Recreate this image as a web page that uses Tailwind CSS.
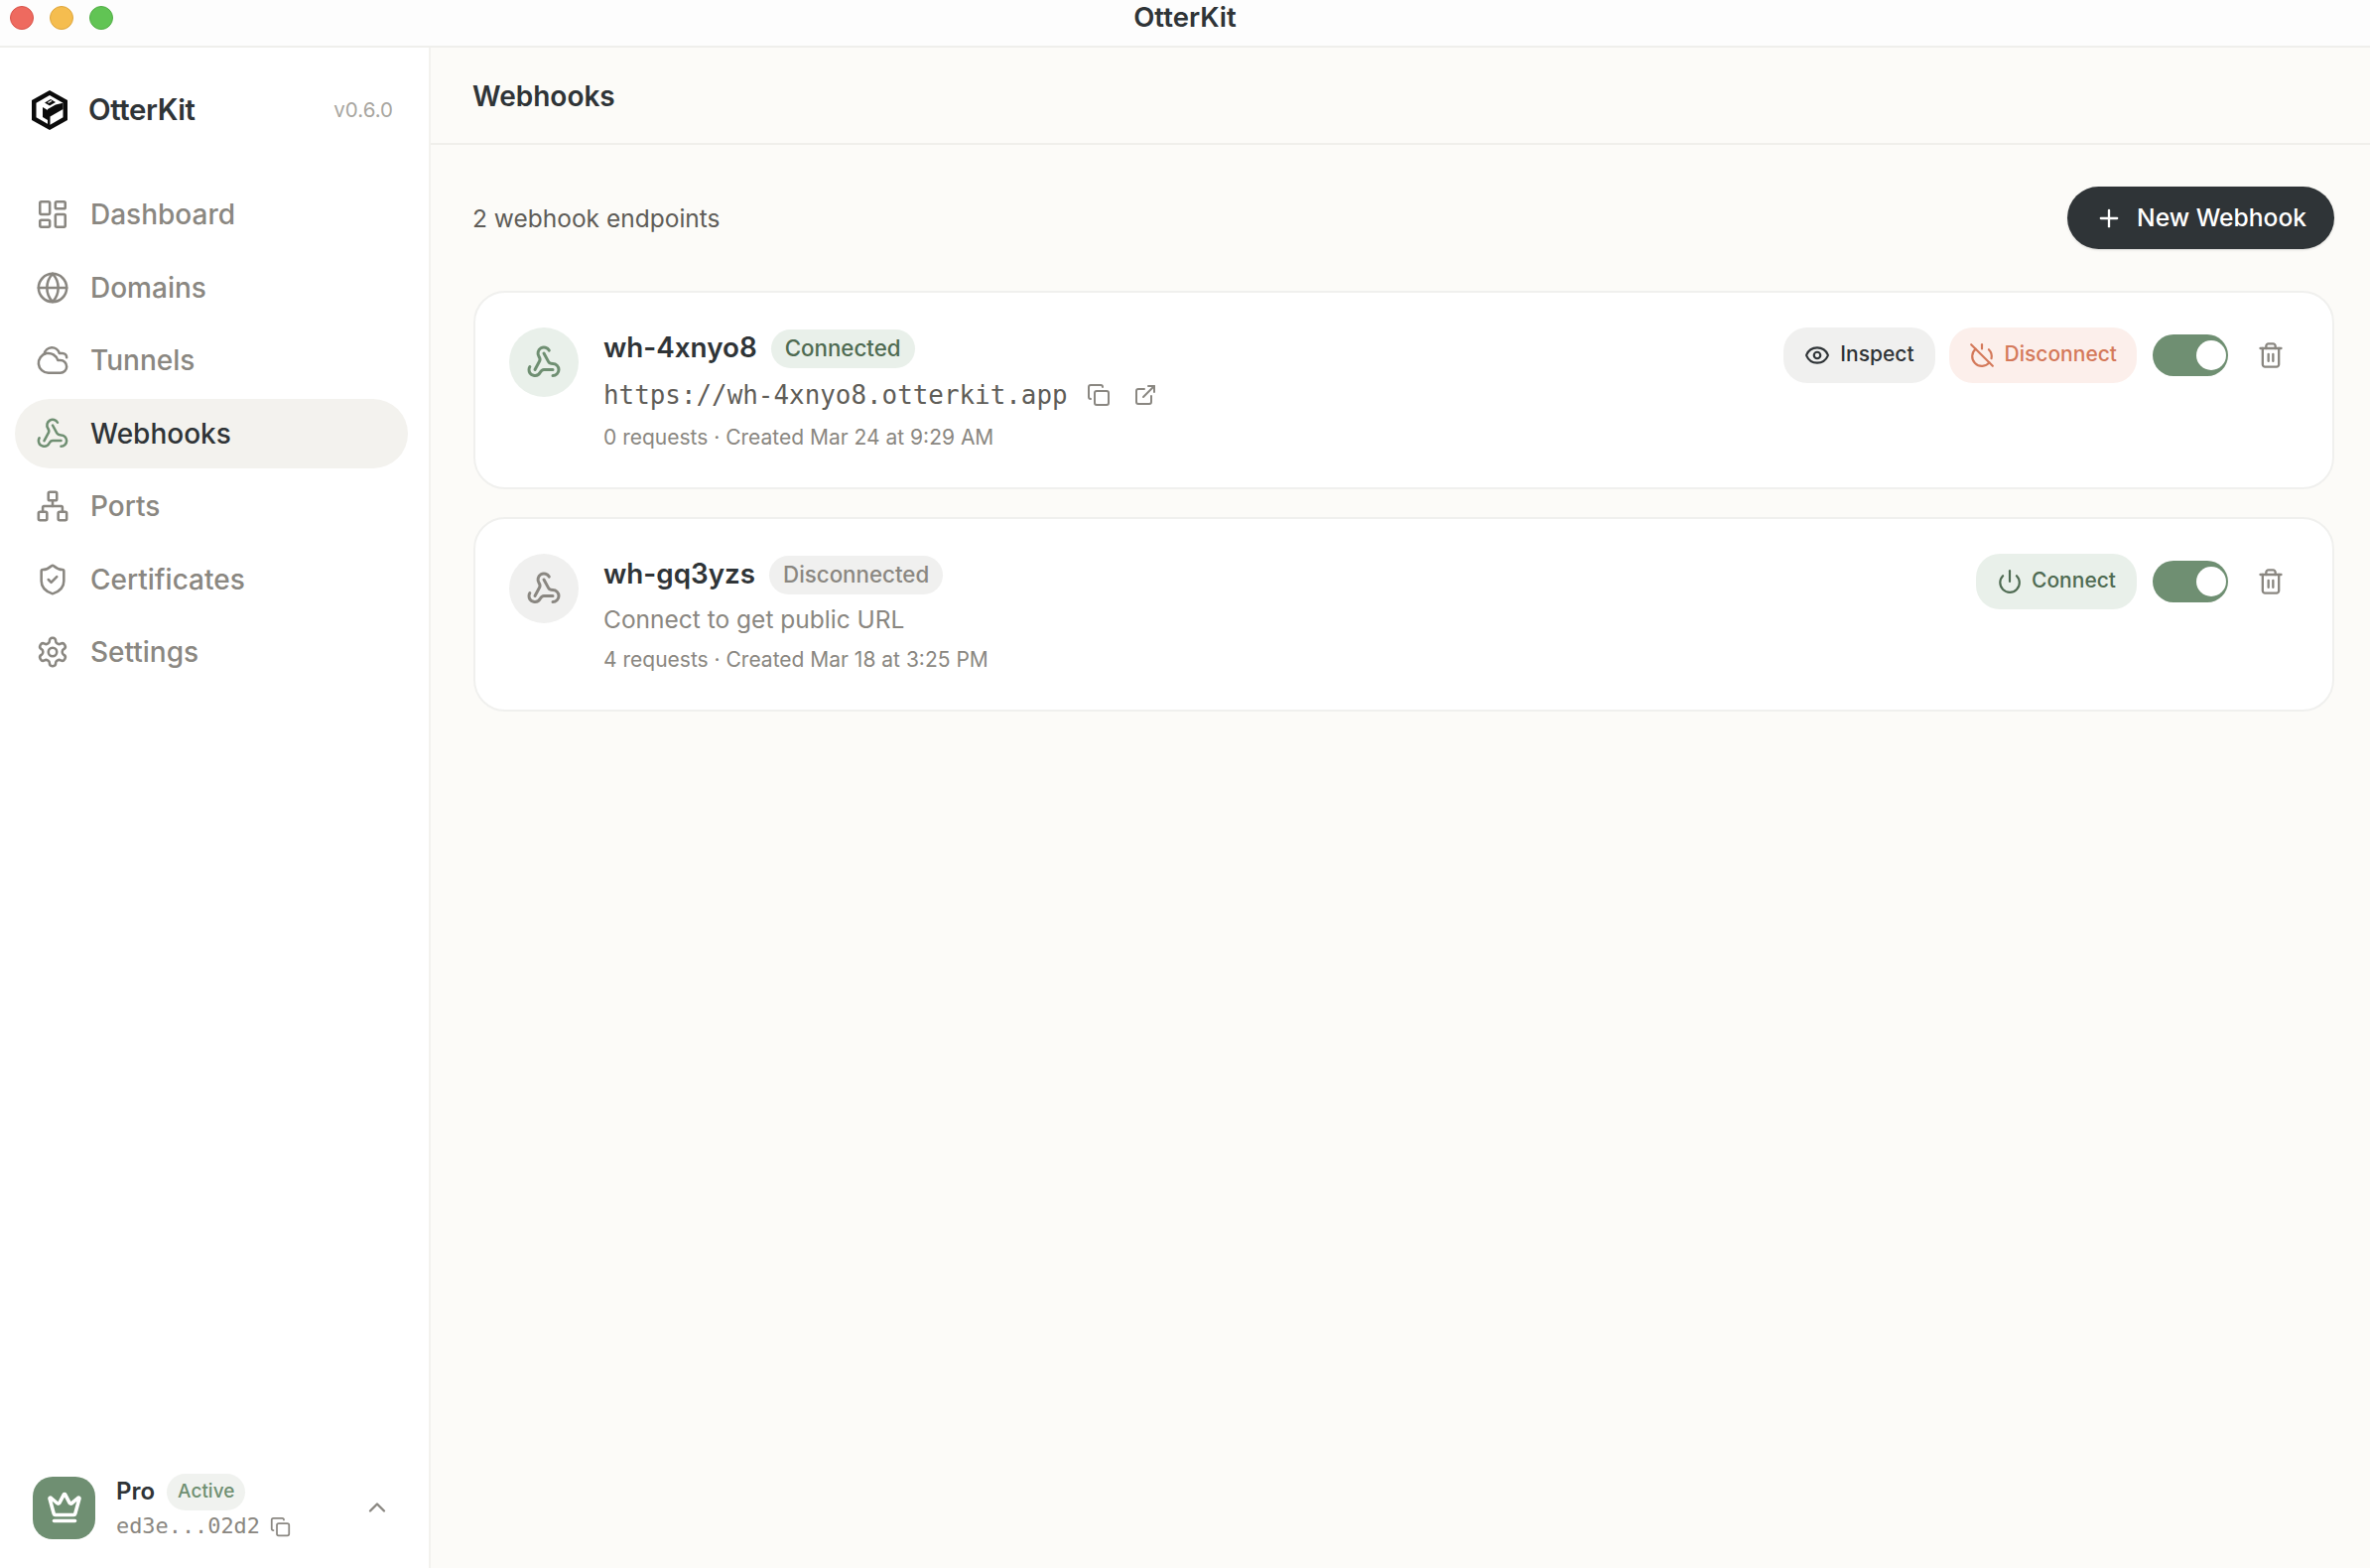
<!doctype html>
<html><head><meta charset="utf-8"><title>OtterKit</title>
<script src="https://cdn.jsdelivr.net/npm/@tailwindcss/browser@4"></script></head>
<body class="m-0 bg-white">
<svg width="0" height="0" class="absolute"><defs>
<symbol id="hook" viewBox="0 0 24 24"><path d="M18 16.98h-5.99c-1.1 0-1.95.94-2.48 1.9A4 4 0 0 1 2 17c.01-.7.2-1.4.57-2"/><path d="m6 17 3.13-5.78c.53-.97.1-2.18-.5-3.1a4 4 0 1 1 6.89-4.06"/><path d="m12 6 3.13 5.73C15.66 12.7 16.9 13 18 13a4 4 0 0 1 0 8"/></symbol>
<symbol id="copy" viewBox="0 0 24 24"><rect x="8" y="8" width="14" height="14" rx="2"/><path d="M4 16c-1.1 0-2-.9-2-2V4c0-1.1.9-2 2-2h10c1.1 0 2 .9 2 2"/></symbol>
<symbol id="trash" viewBox="0 0 24 24"><path d="M3 6h18"/><path d="M19 6v14c0 1-1 2-2 2H7c-1 0-2-1-2-2V6"/><path d="M8 6V4c0-1 1-2 2-2h4c1 0 2 1 2 2v2"/><path d="M10 11v6"/><path d="M14 11v6"/></symbol>
</defs></svg>
<div class="w-[2388px] h-[1580px] flex flex-col overflow-hidden font-['Inter',sans-serif] text-[#2f3437]">
  <header class="relative h-[48px] shrink-0 flex items-center justify-center bg-[#fdfdfd] border-b-2 border-[#efefec] pb-[12px]">
    <div class="absolute left-[10px] top-[6px] flex gap-[16px]">
      <span class="w-[24px] h-[24px] rounded-full bg-[#ee6a5f] border border-[#d9534a]"></span>
      <span class="w-[24px] h-[24px] rounded-full bg-[#f5bd4f] border border-[#dfa63c]"></span>
      <span class="w-[24px] h-[24px] rounded-full bg-[#61c454] border border-[#52ae46]"></span>
    </div>
    <span class="text-[27.5px] leading-[32px] font-semibold">OtterKit</span>
  </header>
  <div class="flex-1 flex min-h-0">
    <aside class="w-[434px] shrink-0 bg-white border-r-2 border-[#f3f2ee] flex flex-col">
      <div class="h-[126px] pl-[32px] pr-[36px] flex items-center shrink-0">
        <svg class="w-[36px] h-[40px]" viewBox="0 0 36 40"><path d="M18 0 36 10V30L18 40 0 30V10Z" fill="#0b0b0b"/><path d="M18 5 31.5 12.7V27.3L18 35 4.5 27.3V12.7Z" fill="#fff"/><path d="M16 19 24 14.5 31.5 12.7V19L18.5 26.5V36H16Z" fill="#0b0b0b"/><path d="M11 17 16 20V30L11 27Z" fill="#0b0b0b"/><path d="M13 12.5 19 9 24 12 18 15.5Z" fill="#0b0b0b"/><path d="M16.5 12.5 20 10.5" stroke="#fff" stroke-width="1.4"/></svg>
        <span class="ml-[21px] text-[29.4px] leading-[40px] font-semibold tracking-[-0.4px]">OtterKit</span>
        <span class="ml-auto text-[20.5px] text-[#a8a6a0]">v0.6.0</span>
      </div>
      <nav class="mt-[7px] pl-[15px] pr-[21px] flex flex-col gap-[3.5px] text-[28px] font-medium text-[#8a8781]">
        <a class="h-[70px] rounded-[35px] pl-[21px] flex items-center gap-[21px]"><svg class="w-[34px] h-[34px]" viewBox="0 0 24 24" fill="none" stroke="currentColor" stroke-width="1.8" stroke-linecap="round" stroke-linejoin="round"><rect x="3" y="3" width="7" height="9" rx="1"/><rect x="14" y="3" width="7" height="5" rx="1"/><rect x="14" y="12" width="7" height="9" rx="1"/><rect x="3" y="16" width="7" height="5" rx="1"/></svg>Dashboard</a>
        <a class="h-[70px] rounded-[35px] pl-[21px] flex items-center gap-[21px]"><svg class="w-[34px] h-[34px]" viewBox="0 0 24 24" fill="none" stroke="currentColor" stroke-width="1.8" stroke-linecap="round" stroke-linejoin="round"><circle cx="12" cy="12" r="10"/><path d="M12 2a14.5 14.5 0 0 0 0 20 14.5 14.5 0 0 0 0-20"/><path d="M2 12h20"/></svg>Domains</a>
        <a class="h-[70px] rounded-[35px] pl-[21px] flex items-center gap-[21px]"><svg class="w-[34px] h-[34px]" viewBox="0 0 24 24" fill="none" stroke="currentColor" stroke-width="1.8" stroke-linecap="round" stroke-linejoin="round"><path d="M17.5 21H9a7 7 0 1 1 6.71-9h1.79a4.5 4.5 0 1 1 0 9Z"/><path d="M22 10a3 3 0 0 0-3-3h-2.207a5.502 5.502 0 0 0-10.702.5"/></svg>Tunnels</a>
        <a class="h-[70px] rounded-[35px] pl-[21px] flex items-center gap-[21px] bg-[#f3f2ee] text-[#2f3437]"><svg class="w-[34px] h-[34px] text-[#6f8f72]" fill="none" stroke="currentColor" stroke-width="1.8" stroke-linecap="round" stroke-linejoin="round"><use href="#hook"/></svg>Webhooks</a>
        <a class="h-[70px] rounded-[35px] pl-[21px] flex items-center gap-[21px]"><svg class="w-[34px] h-[34px]" viewBox="0 0 24 24" fill="none" stroke="currentColor" stroke-width="1.8" stroke-linecap="round" stroke-linejoin="round"><rect x="16" y="16" width="6" height="6" rx="1"/><rect x="2" y="16" width="6" height="6" rx="1"/><rect x="9" y="2" width="6" height="6" rx="1"/><path d="M5 16v-3a1 1 0 0 1 1-1h12a1 1 0 0 1 1 1v3"/><path d="M12 12V8"/></svg>Ports</a>
        <a class="h-[70px] rounded-[35px] pl-[21px] flex items-center gap-[21px]"><svg class="w-[34px] h-[34px]" viewBox="0 0 24 24" fill="none" stroke="currentColor" stroke-width="1.8" stroke-linecap="round" stroke-linejoin="round"><path d="M20 13c0 5-3.5 7.5-7.66 8.95a1 1 0 0 1-.67-.01C7.5 20.5 4 18 4 13V6a1 1 0 0 1 1-1c2 0 4.5-1.2 6.24-2.72a1.17 1.17 0 0 1 1.52 0C14.51 3.81 17 5 19 5a1 1 0 0 1 1 1z"/><path d="m9 12 2 2 4-4"/></svg>Certificates</a>
        <a class="h-[70px] rounded-[35px] pl-[21px] flex items-center gap-[21px]"><svg class="w-[34px] h-[34px]" viewBox="0 0 24 24" fill="none" stroke="currentColor" stroke-width="1.8" stroke-linecap="round" stroke-linejoin="round"><path d="M12.22 2h-.44a2 2 0 0 0-2 2v.18a2 2 0 0 1-1 1.73l-.43.25a2 2 0 0 1-2 0l-.15-.08a2 2 0 0 0-2.73.73l-.22.38a2 2 0 0 0 .73 2.73l.15.1a2 2 0 0 1 1 1.72v.51a2 2 0 0 1-1 1.74l-.15.09a2 2 0 0 0-.73 2.73l.22.38a2 2 0 0 0 2.73.73l.15-.08a2 2 0 0 1 2 0l.43.25a2 2 0 0 1 1 1.73V20a2 2 0 0 0 2 2h.44a2 2 0 0 0 2-2v-.18a2 2 0 0 1 1-1.73l.43-.25a2 2 0 0 1 2 0l.15.08a2 2 0 0 0 2.73-.73l.22-.39a2 2 0 0 0-.73-2.73l-.15-.08a2 2 0 0 1-1-1.74v-.5a2 2 0 0 1 1-1.74l.15-.09a2 2 0 0 0 .73-2.73l-.22-.38a2 2 0 0 0-2.73-.73l-.15.08a2 2 0 0 1-2 0l-.43-.25a2 2 0 0 1-1-1.73V4a2 2 0 0 0-2-2z"/><circle cx="12" cy="12" r="3"/></svg>Settings</a>
      </nav>
      <div class="mt-auto h-[96px] mb-[13px] pl-[33px] pr-[38px] flex items-center">
        <div class="w-[63px] h-[63px] rounded-[20px] bg-[#6f8f72] flex items-center justify-center shrink-0">
          <svg class="w-[36px] h-[36px] text-white" viewBox="0 0 24 24" fill="none" stroke="currentColor" stroke-width="2.4" stroke-linecap="round" stroke-linejoin="round"><path d="M11.562 3.266a.5.5 0 0 1 .876 0L15.39 8.87a1 1 0 0 0 1.516.294L21.183 5.5a.5.5 0 0 1 .798.519l-2.834 10.246a1 1 0 0 1-.956.734H5.81a1 1 0 0 1-.957-.734L2.02 6.02a.5.5 0 0 1 .798-.519l4.276 3.664a1 1 0 0 0 1.516-.294z"/><path d="M5 21h14"/></svg>
        </div>
        <div class="ml-[21px] flex flex-col">
          <div class="flex items-center gap-[12px] h-[38px]"><span class="text-[24px] font-semibold">Pro</span><span class="h-[37px] px-[11px] rounded-full bg-[#f0f2ef] text-[#6f8f72] text-[19px] font-medium flex items-center">Active</span></div>
          <div class="flex items-center gap-[10px] text-[#8a8781] h-[32px]"><span class="font-['DejaVu_Sans_Mono',monospace] text-[21.9px]">ed3e...02d2</span><svg class="w-[21px] h-[21px]" fill="none" stroke="currentColor" stroke-width="2" stroke-linecap="round" stroke-linejoin="round"><use href="#copy"/></svg></div>
        </div>
        <svg class="ml-auto w-[28px] h-[28px] text-[#8a8781]" viewBox="0 0 24 24" fill="none" stroke="currentColor" stroke-width="2" stroke-linecap="round" stroke-linejoin="round"><path d="m18 15-6-6-6 6"/></svg>
      </div>
    </aside>
    <main class="flex-1 min-w-0 bg-[#fcfbf8] flex flex-col">
      <div class="h-[98px] shrink-0 border-b-2 border-[#f0efeb] pl-[42px] pt-[1px] flex items-center"><h1 class="text-[28px] font-semibold">Webhooks</h1></div>
      <div class="pl-[43px] pr-[36px] pt-[42px] flex flex-col">
        <div class="flex items-center justify-between h-[63px]">
          <span class="-ml-[1px] mt-[1px] text-[24.5px] text-[#5f5d58]">2 webhook endpoints</span>
          <button class="h-[63px] pl-[28px] pr-[28px] rounded-full bg-[#2f3437] text-white text-[24.6px] font-medium flex items-center gap-[14px] shadow-sm"><svg class="w-[28px] h-[28px]" viewBox="0 0 24 24" fill="none" stroke="currentColor" stroke-width="2" stroke-linecap="round" stroke-linejoin="round"><path d="M5 12h14"/><path d="M12 5v14"/></svg>New Webhook</button>
        </div>
        <div class="mt-[42px] flex flex-col gap-[28px]">
          <section class="h-[200px] bg-white rounded-[32px] border-2 border-[#f0f0ee] pl-[34px] pr-[48px] pt-[35px] flex">
            <div class="w-[70px] h-[70px] rounded-full bg-[#e9f0ea] text-[#6f8f72] flex items-center justify-center shrink-0"><svg class="w-[36px] h-[36px]" fill="none" stroke="currentColor" stroke-width="2" stroke-linecap="round" stroke-linejoin="round"><use href="#hook"/></svg></div>
            <div class="ml-[25px] flex flex-col pt-[1px]">
              <div class="flex items-center gap-[14px] h-[40px]"><span class="text-[27.8px] font-semibold">wh-4xnyo8</span><span class="h-[39px] px-[14px] rounded-full bg-[#e9f0ea] text-[#4f6b52] text-[22.3px] font-medium flex items-center">Connected</span></div>
              <div class="mt-[7px] h-[40px] flex items-center text-[#5f5d58]"><span class="font-['DejaVu_Sans_Mono',monospace] text-[25.9px]">https://wh-4xnyo8.otterkit.app</span><svg class="ml-[19px] w-[24px] h-[24px] text-[#8a8781]" fill="none" stroke="currentColor" stroke-width="2" stroke-linecap="round" stroke-linejoin="round"><use href="#copy"/></svg><svg class="ml-[23px] w-[24px] h-[24px] text-[#8a8781]" viewBox="0 0 24 24" fill="none" stroke="currentColor" stroke-width="2" stroke-linecap="round" stroke-linejoin="round"><path d="M15 3h6v6"/><path d="M10 14 21 3"/><path d="M18 13v6a2 2 0 0 1-2 2H5a2 2 0 0 1-2-2V8a2 2 0 0 1 2-2h6"/></svg></div>
              <div class="mt-[7px] text-[21px] leading-[32px] text-[#8a8781]">0 requests · Created Mar 24 at 9:29 AM</div>
            </div>
            <div class="ml-auto flex items-start gap-[14px]">
              <button class="h-[56px] px-[21px] pb-[2px] rounded-[24px] bg-[#f0f0ef] text-[21px] font-medium flex items-center gap-[10px]"><svg class="w-[26px] h-[26px] mt-[2px]" viewBox="0 0 24 24" fill="none" stroke="currentColor" stroke-width="2" stroke-linecap="round" stroke-linejoin="round"><path d="M2.062 12.348a1 1 0 0 1 0-.696 10.75 10.75 0 0 1 19.876 0 1 1 0 0 1 0 .696 10.75 10.75 0 0 1-19.876 0"/><circle cx="12" cy="12" r="3"/></svg>Inspect</button>
              <button class="h-[56px] px-[20px] pb-[2px] rounded-[24px] bg-[#fcefeb] text-[#d4795a] text-[21px] font-medium flex items-center gap-[10px]"><svg class="w-[26px] h-[26px] mt-[2px]" viewBox="0 0 24 24" fill="none" stroke="currentColor" stroke-width="2" stroke-linecap="round" stroke-linejoin="round"><path d="M18.36 6.64A9 9 0 0 1 20.77 15"/><path d="M6.16 6.16a9 9 0 1 0 12.68 12.68"/><path d="M12 2v4"/><path d="m2 2 20 20"/></svg>Disconnect</button>
              <div class="ml-[2px] mt-[7px] w-[76px] h-[42px] rounded-full bg-[#6f8f72] flex items-center justify-end pr-[2px]"><span class="w-[30px] h-[30px] rounded-full bg-white"></span></div>
              <svg class="ml-[15px] mt-[14px] w-[28px] h-[28px] text-[#8a8781]" fill="none" stroke="currentColor" stroke-width="2" stroke-linecap="round" stroke-linejoin="round"><use href="#trash"/></svg>
            </div>
          </section>
          <section class="h-[196px] bg-white rounded-[32px] border-2 border-[#f0f0ee] pl-[34px] pr-[48px] pt-[35px] flex">
            <div class="w-[70px] h-[70px] rounded-full bg-[#f0f0ef] text-[#8a8781] flex items-center justify-center shrink-0"><svg class="w-[36px] h-[36px]" fill="none" stroke="currentColor" stroke-width="2" stroke-linecap="round" stroke-linejoin="round"><use href="#hook"/></svg></div>
            <div class="ml-[25px] flex flex-col pt-[1px]">
              <div class="flex items-center gap-[14px] h-[40px]"><span class="text-[27.8px] font-semibold">wh-gq3yzs</span><span class="h-[39px] px-[14px] rounded-full bg-[#f0f0ef] text-[#8a8781] text-[22.3px] font-medium flex items-center">Disconnected</span></div>
              <div class="mt-[5px] h-[40px] flex items-center text-[#8a8781] text-[24.5px]">Connect to get public URL</div>
              <div class="mt-[5px] text-[21px] leading-[32px] text-[#8a8781]">4 requests · Created Mar 18 at 3:25 PM</div>
            </div>
            <div class="ml-auto flex items-start gap-[14px]">
              <button class="h-[56px] px-[21px] pb-[2px] rounded-[24px] bg-[#e9f0ea] text-[#4f6b52] text-[21px] font-medium flex items-center gap-[9px]"><svg class="w-[26px] h-[26px] mt-[2px]" viewBox="0 0 24 24" fill="none" stroke="currentColor" stroke-width="2" stroke-linecap="round" stroke-linejoin="round"><path d="M12 2v10"/><path d="M18.4 6.6a9 9 0 1 1-12.77.04"/></svg>Connect</button>
              <div class="ml-[2px] mt-[7px] w-[76px] h-[42px] rounded-full bg-[#6f8f72] flex items-center justify-end pr-[2px]"><span class="w-[30px] h-[30px] rounded-full bg-white"></span></div>
              <svg class="ml-[15px] mt-[14px] w-[28px] h-[28px] text-[#8a8781]" fill="none" stroke="currentColor" stroke-width="2" stroke-linecap="round" stroke-linejoin="round"><use href="#trash"/></svg>
            </div>
          </section>
        </div>
      </div>
    </main>
  </div>
</div>
</body></html>
